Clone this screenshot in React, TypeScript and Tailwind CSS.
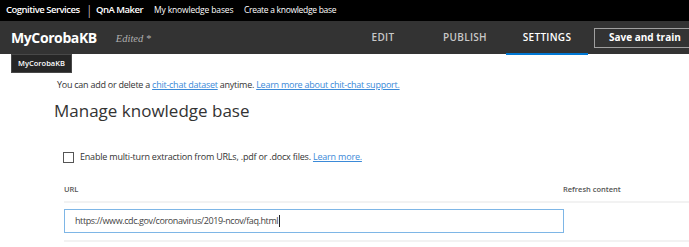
import React from "react";

const App = () => {
  return (
    <div className="w-[689px] h-[247px] overflow-hidden bg-white font-['Open_Sans',sans-serif]">
      {/* Top product bar */}
      <div className="h-[21px] bg-black flex items-center pl-[6px] text-white whitespace-nowrap">
        <span className="w-[80px] text-[9.5px] font-semibold tracking-[-0.5px]">Cognitive Services</span>
        <span className="w-[10px] text-[12px] leading-none font-light">|</span>
        <span className="w-[58px] text-[9.5px] font-semibold tracking-[-0.5px]">QnA Maker</span>
        <span className="w-[90px] text-[8.5px] tracking-[-0.15px]">My knowledge bases</span>
        <span className="text-[8.5px] tracking-[-0.3px]">Create a knowledge base</span>
      </div>

      {/* KB header */}
      <div className="relative h-[33px] bg-[#333333] flex items-center whitespace-nowrap">
        <span className="ml-[11px] text-white font-bold text-[14px] tracking-[-0.4px]">MyCorobaKB</span>
        <span className="ml-[19px] mt-[2px] text-[#b0b0b0] italic text-[10.5px] font-['Liberation_Serif',serif]">
          Edited *
        </span>
        <div className="ml-auto -mr-[12px] flex items-stretch h-full">
          <div className="w-[82px] flex items-center justify-center text-[#c8c8c8] text-[10px] font-semibold tracking-[0.3px]">
            EDIT
          </div>
          <div className="w-[82px] flex items-center justify-center text-[#c8c8c8] text-[10px] font-semibold tracking-[0.3px]">
            PUBLISH
          </div>
          <div className="relative w-[82px] flex items-center justify-center text-white text-[10px] font-semibold tracking-[0.3px]">
            SETTINGS
            <div className="absolute left-0 right-0 bottom-[-1px] h-[2px] bg-[#0078d4]" />
          </div>
          <div className="flex items-center ml-[6px]">
            <div className="h-[20px] w-[107px] border border-[#a0a0a0] flex items-center pl-[14px] text-white text-[10px] font-bold">
              Save and train
            </div>
          </div>
        </div>
        {/* tooltip */}
        <div className="absolute left-[11px] top-[33px] w-[61px] h-[19px] bg-[#262626] border border-[#484848] flex items-center justify-center text-white text-[7.5px] font-semibold">
          MyCorobaKB
        </div>
      </div>

      {/* Content */}
      <div className="pl-[54px]">
        <p className="mt-[24px] ml-[3px] text-[9px] leading-[14px] text-[#333] tracking-[-0.25px] whitespace-nowrap">
          You can add or delete a <span className="text-[#3b8ad8] underline">chit-chat dataset</span> anytime.{" "}
          <span className="text-[#3b8ad8] underline">Learn more about chit-chat support.</span>
        </p>
        <h1 className="mt-[6px] text-[17px] leading-[26px] text-[#333] whitespace-nowrap">
          Manage knowledge base
        </h1>

        <div className="ml-[9px] mt-[25px] h-[16px] flex items-center gap-[6px] whitespace-nowrap">
          <div className="w-[11px] h-[11px] border border-[#555] bg-white" />
          <span className="text-[9px] leading-[16px] text-[#333] tracking-[-0.2px]">
            Enable multi-turn extraction from URLs, .pdf or .docx files.{" "}
            <span className="text-[#3b8ad8] underline">Learn more.</span>
          </span>
        </div>

        <div className="ml-[10px] mt-[18px] h-[13px] flex items-center text-[7.5px] leading-[13px] font-semibold text-[#555] whitespace-nowrap">
          <span className="w-[499px]">URL</span>
          <span>Refresh content</span>
        </div>
        <div className="ml-[10px] mt-[5px] h-[2px] bg-[#f2f2f2]" />
        <div className="ml-[10px] mt-[6px] w-[500px] h-[24px] border border-[#7eb6e6] flex items-center pl-[10px] text-[9px] text-[#444] tracking-[-0.4px] whitespace-nowrap">
          https://www.cdc.gov/coronavirus/2019-ncov/faq.html
          <span className="w-px h-[12px] bg-[#222] ml-[1px]" />
        </div>
        <div className="ml-[10px] mt-[7px] h-[2px] bg-[#f2f2f2]" />
      </div>
    </div>
  );
};

export default App;
